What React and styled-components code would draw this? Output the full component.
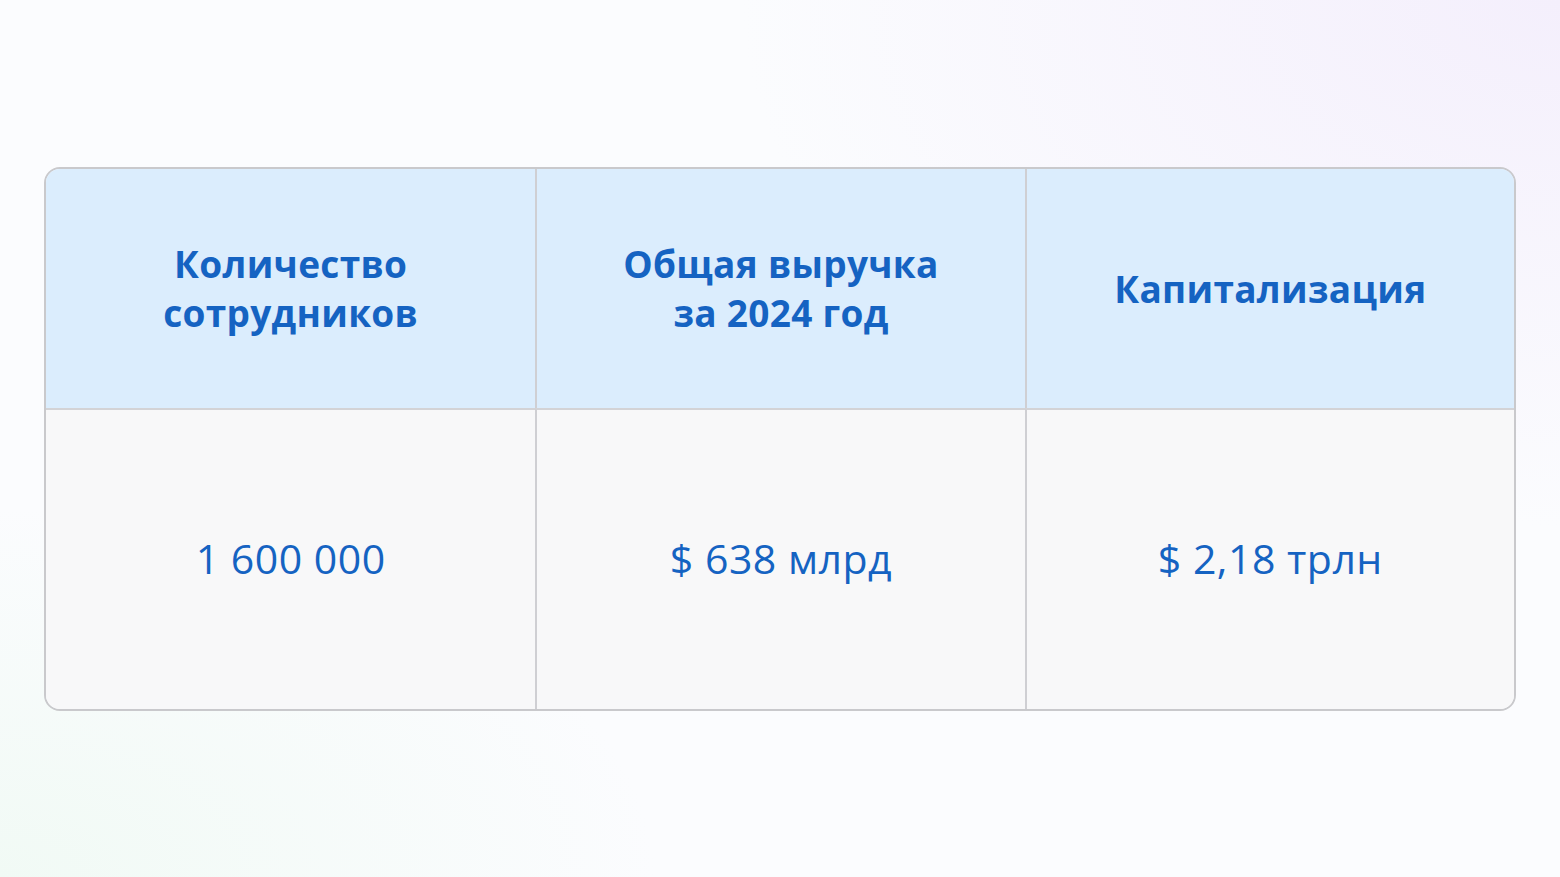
import React from "react";
import styled, { createGlobalStyle } from "styled-components";

const Global = createGlobalStyle`
  html, body { margin: 0; padding: 0; }
  body {
    font-family: "Open Sans", "Noto Sans", sans-serif;
    background: #fbfbfd;
  }
`;

const Page = styled.div`
  width: 100vw;
  height: 100vh;
  display: flex;
  align-items: center;
  justify-content: center;
  background:
    radial-gradient(ellipse 70% 80% at 100% 0%, rgba(244, 239, 252, 1) 0%, rgba(244, 239, 252, 0) 75%),
    radial-gradient(ellipse 60% 60% at 0% 100%, rgba(241, 250, 245, 1) 0%, rgba(241, 250, 245, 0) 70%),
    #fbfcfe;
`;

const Table = styled.div`
  width: 1472px;
  box-sizing: border-box;
  border: 2px solid #c9c9cc;
  border-radius: 16px;
  overflow: hidden;
  display: grid;
  grid-template-columns: repeat(3, 1fr);
  grid-template-rows: 239px 301px;
`;

const Cell = styled.div`
  display: flex;
  align-items: center;
  justify-content: center;
  text-align: center;
  color: #1563c2;
  background: ${(p) => (p.$head ? "#dbedfd" : "#f8f8f9")};
  border-left: ${(p) => (p.$first ? "none" : "2px solid #cfcfd3")};
  border-top: ${(p) => (p.$head ? "none" : "2px solid #d3d3d6")};
  font-size: ${(p) => (p.$head ? "37px" : "41px")};
  font-weight: ${(p) => (p.$head ? 700 : 400)};
  letter-spacing: ${(p) => (p.$head ? "0.3px" : "0.5px")};
  line-height: ${(p) => (p.$head ? "49px" : "48px")};
  padding-bottom: ${(p) => (p.$head ? "0" : "2px")};
`;

const heads = [
  ["Количество", "сотрудников"],
  ["Общая выручка", "за 2024 год"],
  ["Капитализация"],
];
const values = ["1 600 000", "$ 638 млрд", "$ 2,18 трлн"];

export default function App() {
  return (
    <>
      <Global />
      <Page>
        <Table>
          {heads.map((h, i) => (
            <Cell key={"h" + i} $head $first={i === 0}>
              <div>
                {h.map((l, j) => (
                  <div key={j}>{l}</div>
                ))}
              </div>
            </Cell>
          ))}
          {values.map((v, i) => (
            <Cell key={"v" + i} $first={i === 0}>
              {v}
            </Cell>
          ))}
        </Table>
      </Page>
    </>
  );
}
